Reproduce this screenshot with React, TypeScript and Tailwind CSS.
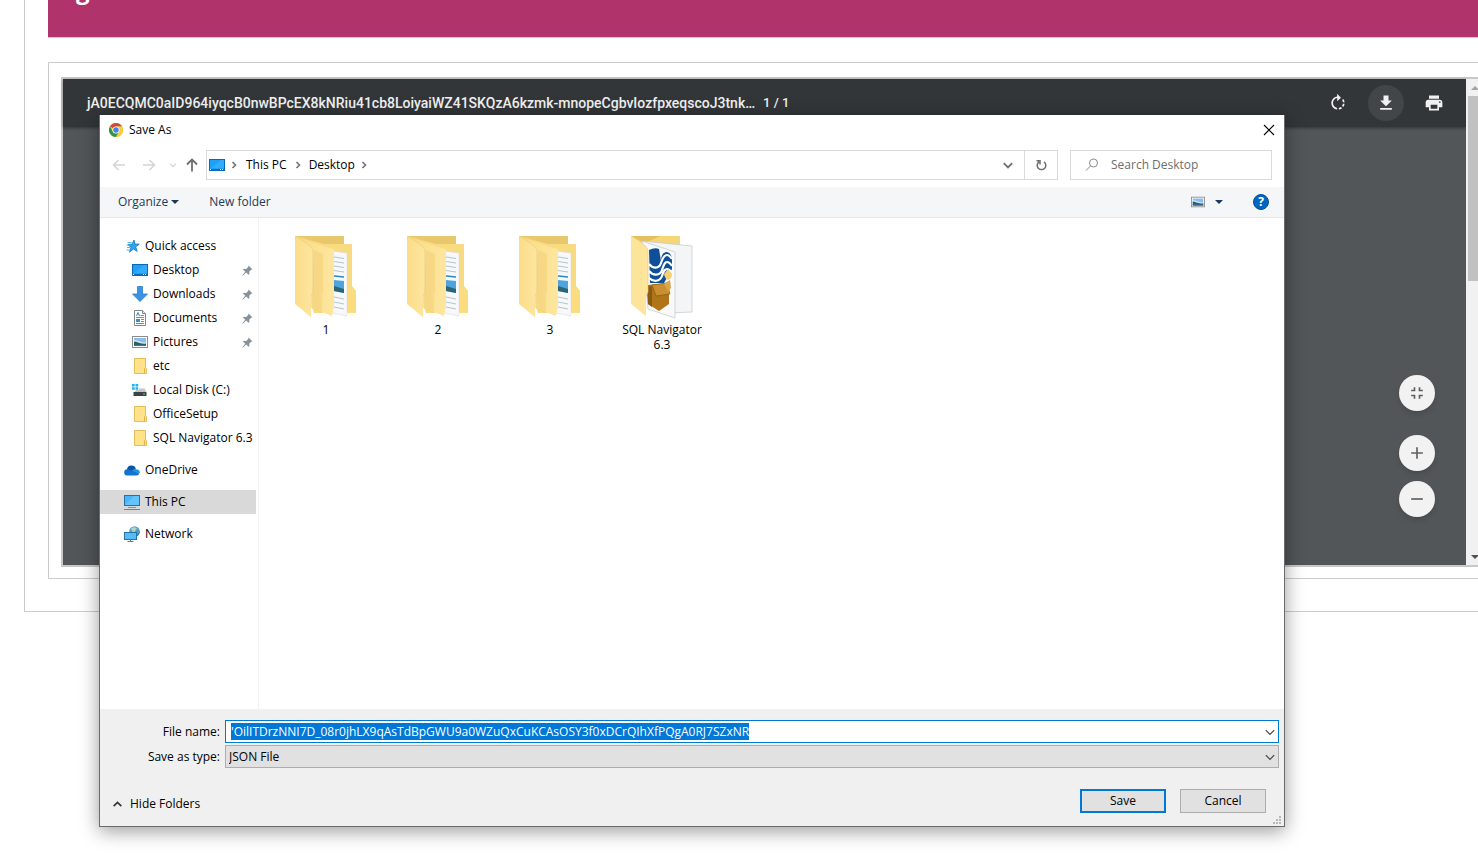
import { useEffect, useRef, type ReactNode } from "react";
import { MdAdd, MdFullscreenExit, MdPrint, MdRemove, MdRotateRight } from "react-icons/md";

const FILE_NAME =
  "'OilITDrzNNI7D_08r0jhLX9qAsTdBpGWU9a0WZuQxCuKCAsOSY3f0xDCrQIhXfPQgA0RJ7SZxNR";

function DownloadIcon() {
  return (
    <svg viewBox="0 0 24 24" className="size-5" fill="currentColor" aria-hidden="true">
      <path d="M19 9h-4V3H9v6H5l7 7 7-7zM5 18v2h14v-2H5z" />
    </svg>
  );
}

function ChromeIcon() {
  return (
    <svg viewBox="0 0 48 48" className="size-[14px]" aria-hidden="true">
      <circle cx="24" cy="24" r="24" fill="#fbc93c" />
      <path d="M24 24 3.2 12A24 24 0 0 1 44.8 12H24z" fill="#d04a3c" />
      <path d="M3.2 12A24 24 0 0 0 24 48l10.4-18L24 24 13.6 30z" fill="#2a9a4a" />
      <path d="M24 12h20.8A24 24 0 0 1 24 48l10.4-18z" fill="#fbc93c" />
      <circle cx="24" cy="24" r="12" fill="#fff" />
      <circle cx="24" cy="24" r="9.5" fill="#4a80e8" />
    </svg>
  );
}

function Chevron({ dir = "down", className = "" }: { dir?: "down" | "up" | "right"; className?: string }) {
  const d = dir === "down" ? "M1.5 3.5 5 7l3.5-3.5" : dir === "up" ? "M1.5 6.5 5 3l3.5 3.5" : "M3.5 2 6.5 5l-3 3";
  return (
    <svg viewBox="0 0 10 10" className={className} fill="none" stroke="currentColor" aria-hidden="true">
      <path d={d} />
    </svg>
  );
}

function Triangle() {
  return (
    <svg viewBox="0 0 8 4" className="h-1 w-2" fill="currentColor" aria-hidden="true">
      <path d="M0 0h8L4 4z" />
    </svg>
  );
}

function DesktopIcon() {
  return (
    <svg viewBox="0 0 16 16" className="size-4 shrink-0" aria-hidden="true">
      <rect x=".5" y="2.5" width="15" height="11" fill="#1fa0f8" stroke="#0a69b4" />
      <path d="M1 12 12 3h3v8H1z" fill="#3fb2ff" opacity=".6" />
      <path d="M1 12.5h14" stroke="#0b6fbe" />
      <path d="M1 12.5h1M11 12.5h1M13 12.5h1" stroke="#fff" />
    </svg>
  );
}

function StarIcon() {
  return (
    <svg viewBox="0 0 16 16" className="size-4 shrink-0" aria-hidden="true">
      <path d="m10 2 .9 4 4.400.1-3.600 2.700 1.500 4.600-3.800-2.400-3.900 3.100 1.400-4.600-2.900-3 4-.3z" fill="#2ea3ee" stroke="#1578bf" strokeWidth=".8" />
      <path d="M3.500 4.500h4M2.500 7h3M3 9.500h3M2.500 12h3.500" stroke="#4aa8e4" strokeWidth=".9" />
    </svg>
  );
}

function DownArrowIcon() {
  return (
    <svg viewBox="0 0 16 16" className="size-4 shrink-0" aria-hidden="true">
      <path d="M5.5.5h5V8h5L8 15.5.5 8h5z" fill="#3a93e4" stroke="#2b7fcd" strokeWidth=".8" />
    </svg>
  );
}

function DocumentIcon() {
  return (
    <svg viewBox="0 0 16 16" className="size-4 shrink-0" aria-hidden="true">
      <path d="M2.5.5h8l3 3v12h-11z" fill="#fff" stroke="#80868a" />
      <path d="M10.5.5v3h3" fill="#e4e4e4" stroke="#80868a" />
      <path d="M4.500 6 6 2.500 7.500 6" fill="none" stroke="#2c8fc9" />
      <path d="M8.500 5.500H12M4 7.500h8M9 9.500h3M9 11.500h3M4 13.500h8" stroke="#4a9bc9" />
      <rect x="4" y="9" width="4" height="3" fill="#3c8fc0" />
    </svg>
  );
}

function PictureIcon({ className = "size-4" }: { className?: string }) {
  return (
    <svg viewBox="0 0 16 16" className={`${className} shrink-0`} aria-hidden="true">
      <rect x=".5" y="2.5" width="15" height="11" fill="#fff" stroke="#8c8c8c" />
      <rect x="2" y="4" width="12" height="8" fill="#8cbdf0" />
      <path d="M2 6c3 0 5 2 12 2.500V12H2z" fill="#d4e6f2" />
      <path d="M2 7.500c3 0 6 3 12 2V12H2z" fill="#2a5f68" />
      <path d="M2 10.800h12V12H2z" fill="#3b6fae" />
    </svg>
  );
}

function SmallFolderIcon() {
  return (
    <svg viewBox="0 0 16 16" className="size-4 shrink-0" aria-hidden="true">
      <path d="M2.500.5h11v9.500l1 .5v5h-12z" fill="#ffe28a" stroke="#e3bd5a" />
      <path d="M12.500 15V10.500l1-1" fill="none" stroke="#dcb44c" />
    </svg>
  );
}

function DiskIcon() {
  return (
    <svg viewBox="0 0 16 16" className="size-4 shrink-0" aria-hidden="true">
      <path d="M0 2h2.700v2.500H0zM3.500 2h2.700v2.500H3.500zM0 5.300h2.700v2.500H0zM3.500 5.300h2.700v2.500H3.500z" fill="#1fb4e8" />
      <path d="m2.500 10 1.500-2h3V6.500h5.500l2 3.500z" fill="#c4c7ca" />
      <rect x="1.500" y="10" width="13" height="4" fill="#3d4246" />
      <rect x="11" y="11.500" width="2" height="1" fill="#45e060" />
    </svg>
  );
}

function CloudIcon() {
  return (
    <svg viewBox="0 0 16 16" className="size-4 shrink-0" aria-hidden="true">
      <path d="M3 7.500a4.500 4.500 0 0 1 8.800-.6L8 12H2z" fill="#0a55a5" />
      <path d="M8.500 8a3.800 3.800 0 0 1 4.500-.5A3.300 3.300 0 0 1 15.800 11L13 13H4z" fill="#2492e2" />
      <path d="M.2 10.500A3.200 3.200 0 0 1 3.500 7.300q1.500 0 2.700.8l9 3.900a3 3 0 0 1-2.400 1.500H3.300A3 3 0 0 1 .2 10.500z" fill="#1073d0" />
    </svg>
  );
}

function ComputerIcon() {
  return (
    <svg viewBox="0 0 16 16" className="size-4 shrink-0" aria-hidden="true">
      <rect x=".5" y="1.500" width="15" height="10" fill="#48b6f8" stroke="#2b6f9e" />
      <path d="m1 11 9-9h5v9z" fill="#6fcaff" opacity=".7" />
      <path d="M4 13.500h8" stroke="#7d98ab" />
      <path d="M0 15.500h16" stroke="#6d8494" />
    </svg>
  );
}

function NetworkIcon() {
  return (
    <svg viewBox="0 0 16 16" className="size-4 shrink-0" aria-hidden="true">
      <circle cx="10.500" cy="5.500" r="5.300" fill="#5a9cbd" />
      <path d="M7 2.500c2-2 5-1.500 6 .5-2 .5-1 2.500-3 3s-2-2-3-3.500z" fill="#a9d5c4" />
      <path d="M11 11c2-1 4-3 4.800-6.500C16 8 14 10.500 11 11z" fill="#2e6c94" />
      <rect x=".5" y="6.500" width="12" height="7" fill="#55bcf8" stroke="#2472a6" />
      <path d="M3.500 15.500h6M6.500 13.500v2" stroke="#5d8199" />
    </svg>
  );
}

function PinIcon() {
  return (
    <svg viewBox="0 0 11 11" className="size-[11px] shrink-0" fill="#87929a" aria-hidden="true">
      <path d="m6.500.5 4 4-1.300.3-2 2 .3 2.200-1 .7-2.300-2.300L.8 10.700l-.5-.5 3-3.500L1 4.500l.8-.8 2.400.2 2-2z" />
    </svg>
  );
}

function FolderIcon() {
  return (
    <svg viewBox="0 0 64 84" className="h-[84px] w-16" aria-hidden="true">
      <defs>
        <linearGradient id="folder-flap" x1="0" x2="1">
          <stop offset="0" stopColor="#fbdd88" />
          <stop offset="1" stopColor="#fde6a0" />
        </linearGradient>
      </defs>
      <path d="M1 1h49v8h7q1 0 1 1v42l4 4v21q0 1-1 1H20z" fill="#f8da80" />
      <path d="M1 1h49v8H30z" fill="#e9c76c" />
      <path d="M54 78V54l4-3 4 5v21q0 1-1 1z" fill="#fbdd80" />
      <path d="m38 16 15 2v63l-15-3z" fill="#f6f8fa" stroke="#d5d9dd" strokeWidth=".5" />
      <path d="m40 22 10 1.500m-10 3L50 28m-10 3 10 1.500m-10 3L50 37m-10 25 10 2m-10 3 10 2m-10 3 10 2" stroke="#a6b6c2" strokeWidth=".8" />
      <path d="m40 41 10 1" stroke="#2d85c4" strokeWidth="1.500" />
      <path d="m40 45 10 1v12l-10-2z" fill="#4ea4dc" />
      <path d="m40 51 10 3v4l-10-2z" fill="#2b6577" />
      <path d="M10 5q4 1 8 2.500L39 14q1 0 1 1v57l-2 9-28-11z" fill="url(#folder-flap)" />
      <path d="m20 15 9 4v37l-1 4v18l-10-4z" fill="#f0ce78" opacity=".5" />
      <path d="M1 1q16 9 18 14v42l-2 4v21L1 69z" fill="url(#folder-flap)" />
      <path d="M1 1q16 9 18 14v42l-2 4" fill="none" stroke="#e9c86f" strokeWidth=".6" />
    </svg>
  );
}

function NavigatorFolderIcon() {
  return (
    <svg viewBox="0 0 64 84" className="h-[84px] w-16" aria-hidden="true">
      <path d="M1 1h49v20H14z" fill="#f6d778" />
      <path d="M1 1h30L14 8z" fill="#e6c05f" />
      <path d="m12 6 50 5v66l-24 1z" fill="#f4f5f6" stroke="#c3c6c8" strokeWidth=".7" />
      <path d="m12 6 33 11v66L18 74z" fill="#f9f9fa" stroke="#c3c6c8" strokeWidth=".7" />
      <path d="M19 15q6-3 10-1l2 12q0-8 5-9 5 0 6 7v10l-8 14H20z" fill="#0e4f99" />
      <path d="M19 29c4 5 10 5 12-1s4-8 6-8 3 1 5 4M19 36c4 5 11 5 13-1s3-8 5-8 3 1 5 4M19 43c4 4 11 4 13-2s3-7 5-7 3 1 4 3" fill="none" stroke="#fff" strokeWidth="2.200" />
      <path d="m34 39 4-5 4 5q0 5-4 6-3-1-4-6z" fill="#f5cf74" />
      <path d="m17 50 22-2v21l-10 7-11-7z" fill="#b07518" />
      <path d="m17 50 5 2v20l-4-3z" fill="#8a5a10" />
      <path d="m22 50 15-2 3 11-14 2z" fill="#c98f32" stroke="#8a5a10" strokeWidth=".7" />
      <path d="m34 49 6-4 1 8-3 4z" fill="#d9a54a" />
      <path d="M1 1q15 8 17 14v42l-2 4v20L1 69z" fill="#fde49b" />
      <path d="M1 1q15 8 17 14v42l-2 4" fill="none" stroke="#e9c86f" strokeWidth=".6" />
    </svg>
  );
}

type NavEntry = { label: string; icon: ReactNode; nested?: boolean; pinned?: boolean; selected?: boolean };

const navGroups: NavEntry[][] = [
  [
    { label: "Quick access", icon: <StarIcon /> },
    { label: "Desktop", icon: <DesktopIcon />, nested: true, pinned: true },
    { label: "Downloads", icon: <DownArrowIcon />, nested: true, pinned: true },
    { label: "Documents", icon: <DocumentIcon />, nested: true, pinned: true },
    { label: "Pictures", icon: <PictureIcon />, nested: true, pinned: true },
    { label: "etc", icon: <SmallFolderIcon />, nested: true },
    { label: "Local Disk (C:)", icon: <DiskIcon />, nested: true },
    { label: "OfficeSetup", icon: <SmallFolderIcon />, nested: true },
    { label: "SQL Navigator 6.3", icon: <SmallFolderIcon />, nested: true },
  ],
  [{ label: "OneDrive", icon: <CloudIcon /> }],
  [{ label: "This PC", icon: <ComputerIcon />, selected: true }],
  [{ label: "Network", icon: <NetworkIcon /> }],
];

const folders = [
  { name: "1", icon: <FolderIcon /> },
  { name: "2", icon: <FolderIcon /> },
  { name: "3", icon: <FolderIcon /> },
  { name: "SQL Navigator 6.3", icon: <NavigatorFolderIcon /> },
];

function PdfViewer() {
  return (
    <div className="-mr-[5px] flex h-[490px] border-2 border-r-0 border-[#c8c8c8] bg-[#525659]">
      <div className="flex min-w-0 flex-1 flex-col">
        <header className="flex h-12 shrink-0 items-center bg-[#323639] pr-[14px] pl-6 font-['Roboto',sans-serif] text-[#f1f1f1] shadow-[0_1px_3px_rgba(0,0,0,0.4)]">
          <h2 className="text-[14px] font-medium whitespace-nowrap">
            jA0ECQMC0aID964iyqcB0nwBPcEX8kNRiu41cb8LoiyaiWZ41SKQzA6kzmk-mnopeCgbvIozfpxeqscoJ3tnk…
          </h2>
          <span className="ml-2 text-[13px] font-medium">1 / 1</span>
          <div className="ml-auto flex gap-3">
            <button aria-label="Rotate" className="flex size-9 items-center justify-center">
              <MdRotateRight className="size-5" />
            </button>
            <button aria-label="Download" className="flex size-9 items-center justify-center rounded-full bg-[#424649]">
              <DownloadIcon />
            </button>
            <button aria-label="Print" className="flex size-9 items-center justify-center">
              <MdPrint className="size-5" />
            </button>
          </div>
        </header>
        <div className="flex flex-1 flex-col items-end justify-end pr-[31px] pb-12 text-[#616161]">
          <button aria-label="Fit to page" className="mb-6 flex size-9 items-center justify-center rounded-full bg-[#f2f2f2] shadow-md">
            <MdFullscreenExit className="size-5" />
          </button>
          <button aria-label="Zoom in" className="mb-[10px] flex size-9 items-center justify-center rounded-full bg-[#f2f2f2] shadow-md">
            <MdAdd className="size-5" />
          </button>
          <button aria-label="Zoom out" className="flex size-9 items-center justify-center rounded-full bg-[#f2f2f2] shadow-md">
            <MdRemove className="size-5" />
          </button>
        </div>
      </div>
      <div className="flex w-[17px] shrink-0 flex-col items-center bg-[#f1f1f1]">
        <span className="flex h-[17px] items-center text-[#a3a3a3]">
          <svg viewBox="0 0 8 4" className="h-1 w-2" fill="currentColor" aria-hidden="true">
            <path d="M0 4h8L4 0z" />
          </svg>
        </span>
        <span className="h-[185px] w-[13px] bg-[#c1c1c1]" />
        <span className="mt-auto flex h-[17px] items-center text-[#505050]">
          <Triangle />
        </span>
      </div>
    </div>
  );
}

function AddressRow() {
  return (
    <div className="flex h-[42px] items-center pr-3 pb-[2px] pl-[11px]">
      <div className="flex w-[95px] shrink-0 items-center text-[#d4d4d4]">
        <button aria-label="Back" className="mr-[14px] flex w-4 justify-center">
          <svg viewBox="0 0 14 14" className="size-[14px]" fill="none" stroke="currentColor" strokeWidth="1.5">
            <path d="M13 7H1.500M6.500 2l-5 5 5 5" />
          </svg>
        </button>
        <button aria-label="Forward" className="mr-3 flex w-4 justify-center">
          <svg viewBox="0 0 14 14" className="size-[14px]" fill="none" stroke="currentColor" strokeWidth="1.5">
            <path d="M1 7h11.500M7.500 2l5 5-5 5" />
          </svg>
        </button>
        <button aria-label="Recent locations" className="mr-2">
          <Chevron className="size-2 stroke-[1.5]" />
        </button>
        <button aria-label="Up" className="text-[#6e6e6e]">
          <svg viewBox="0 0 14 14" className="size-[14px]" fill="none" stroke="currentColor" strokeWidth="1.800">
            <path d="M7 13.500V1.500M2 6.500l5-5 5 5" />
          </svg>
        </button>
      </div>
      <div className="flex h-[30px] min-w-0 flex-1 items-stretch border border-[#d9d9d9] text-[#6e6e6e]">
        <nav aria-label="Address" className="flex flex-1 items-center pl-[2px]">
          <DesktopIcon />
          <Chevron dir="right" className="ml-1 size-[10px] stroke-[1.5]" />
          <a href="#this-pc" className="ml-[7px] text-black">This PC</a>
          <Chevron dir="right" className="mx-[6px] size-[10px] stroke-[1.5]" />
          <a href="#desktop" className="text-black">Desktop</a>
          <Chevron dir="right" className="ml-1 size-[10px] stroke-[1.5]" />
        </nav>
        <button aria-label="Previous locations" className="flex w-8 items-center justify-center">
          <Chevron className="size-3 stroke-[1.5]" />
        </button>
        <button aria-label="Refresh" className="flex w-[33px] items-center justify-center border-l border-[#d9d9d9]">
          <svg viewBox="0 0 12 12" className="size-3" fill="none" stroke="currentColor" strokeWidth="1.500">
            <path d="M4 2.800a4.300 4.300 0 1 0 5 0M1.500 1.700H5v3.700" />
          </svg>
        </button>
      </div>
      <div className="ml-3 flex h-[30px] w-[202px] items-center border border-[#d9d9d9] pl-[14px]">
        <svg viewBox="0 0 14 14" className="size-[14px] shrink-0" fill="none" stroke="#8a8a8a" aria-hidden="true">
          <circle cx="8.500" cy="5" r="4" />
          <path d="M5.500 8 1 12.500" />
        </svg>
        <input aria-label="Search Desktop" placeholder="Search Desktop" className="ml-3 w-full min-w-0 bg-transparent outline-none placeholder:text-[#6d6d6d]" />
      </div>
    </div>
  );
}

function Sidebar() {
  return (
    <nav aria-label="Folders" className="flex w-[159px] shrink-0 flex-col gap-2 border-r border-[#f2f2f2] pt-4 pr-[2px]">
      {navGroups.map((group) => (
        <ul key={group[0].label}>
          {group.map((entry) => (
            <li key={entry.label}>
              <a
                href="#folder"
                className={`flex h-6 items-center gap-[5px] pr-[3px] whitespace-nowrap ${entry.nested ? "pl-8" : "pl-6"} ${entry.selected ? "bg-[#d9d9d9]" : ""}`}
              >
                {entry.icon}
                <span className="flex-1">{entry.label}</span>
                {entry.pinned && <PinIcon />}
              </a>
            </li>
          ))}
        </ul>
      ))}
    </nav>
  );
}

function SaveDialog() {
  const nameRef = useRef<HTMLInputElement>(null);
  useEffect(() => {
    nameRef.current?.focus();
    nameRef.current?.select();
  }, []);

  return (
    <section
      role="dialog"
      aria-label="Save As"
      className="absolute top-[115px] right-[193px] left-[99px] border border-t-0 border-[#6b6b6b] bg-white font-['Open_Sans','Noto_Sans',sans-serif] text-[12px] leading-4 text-black shadow-[0_4px_18px_rgba(0,0,0,0.4)]"
    >
      <header className="flex h-[30px] items-center px-[9px]">
        <ChromeIcon />
        <h1 className="ml-[6px]">Save As</h1>
        <button aria-label="Close" className="ml-auto">
          <svg viewBox="0 0 12 12" className="size-3" fill="none" stroke="#000" strokeWidth="1.100">
            <path d="m1 1 10 10M11 1 1 11" />
          </svg>
        </button>
      </header>
      <AddressRow />
      <div className="flex h-[31px] items-center border-b border-[#e6e8ea] bg-[#f4f6f8] pr-[15px] pl-[18px] text-[#1e395b]">
        <button className="flex items-center gap-[3px]">
          Organize <Triangle />
        </button>
        <button className="ml-[30px]">New folder</button>
        <button aria-label="Change view" className="ml-auto">
          <PictureIcon className="size-[14px]" />
        </button>
        <button aria-label="More view options" className="ml-[10px]">
          <Triangle />
        </button>
        <button aria-label="Help" className="ml-[30px] flex size-4 items-center justify-center rounded-full border border-[#0a4f94] bg-[#0067c0] font-bold text-white">
          ?
        </button>
      </div>
      <div className="flex h-[491px]">
        <Sidebar />
        <ul className="flex flex-1 flex-wrap content-start pt-[17px] pl-[11px]">
          {folders.map((folder) => (
            <li key={folder.name} className="flex w-28 flex-col items-center text-center leading-[15px]">
              {folder.icon}
              <span className="mt-[3px] w-20">{folder.name}</span>
            </li>
          ))}
        </ul>
      </div>
      <form className="bg-[#f0f0f0] pt-[11px] pr-[5px]" onSubmit={(event) => event.preventDefault()}>
        <div className="grid grid-cols-[120px_1fr] items-center gap-x-[5px] gap-y-[2px]">
          <label htmlFor="file-name" className="text-right">File name:</label>
          <div className="relative">
            <input
              id="file-name"
              ref={nameRef}
              defaultValue={FILE_NAME}
              className="block h-[23px] w-full border border-[#0078d7] bg-white pr-5 pl-[5px] outline-none selection:bg-[#0078d7] selection:text-white"
            />
            <Chevron className="pointer-events-none absolute top-[6px] right-[3px] size-3 text-[#444]" />
          </div>
          <label htmlFor="file-type" className="text-right">Save as type:</label>
          <div className="relative">
            <select id="file-type" className="block h-[23px] w-full appearance-none border border-[#adadad] bg-[#e1e1e1] pl-[3px] outline-none">
              <option>JSON File</option>
            </select>
            <Chevron className="pointer-events-none absolute top-[6px] right-[3px] size-3 text-[#444]" />
          </div>
        </div>
        <div className="flex pt-[21px] pr-[13px] pb-[13px] pl-3">
          <button type="button" className="flex items-center gap-[7px] pt-[6px]">
            <Chevron dir="up" className="size-[11px] stroke-[1.5] text-[#333]" />
            Hide Folders
          </button>
          <button type="submit" className="ml-auto h-6 w-[86px] border-2 border-[#0078d7] bg-[#e1e1e1]">Save</button>
          <button type="button" className="ml-[14px] h-6 w-[86px] border border-[#adadad] bg-[#e1e1e1]">Cancel</button>
        </div>
      </form>
      <svg viewBox="0 0 8 8" className="absolute right-[3px] bottom-[2px] size-2" fill="#b8b8b8" aria-hidden="true">
        <path d="M6 0h2v2H6zM3 3h2v2H3zM6 3h2v2H6zM0 6h2v2H0zM3 6h2v2H3zM6 6h2v2H6z" />
      </svg>
    </section>
  );
}

export default function App() {
  return (
    <div className="relative min-h-screen overflow-hidden bg-white">
      <main className="ml-6 border-b border-l border-[#ccc] pb-8 pl-[23px]">
        <div className="h-[38px] overflow-hidden border-b border-[#eeb9d3] bg-[#b0336b] pl-7 font-['Open_Sans',sans-serif] text-[24px] leading-6 font-bold text-white">
          <p className="-mt-[22px]">g</p>
        </div>
        <div className="mt-6 border border-r-0 border-[#ccc] pt-[14px] pb-[11px] pl-3">
          <PdfViewer />
        </div>
      </main>
      <SaveDialog />
    </div>
  );
}
